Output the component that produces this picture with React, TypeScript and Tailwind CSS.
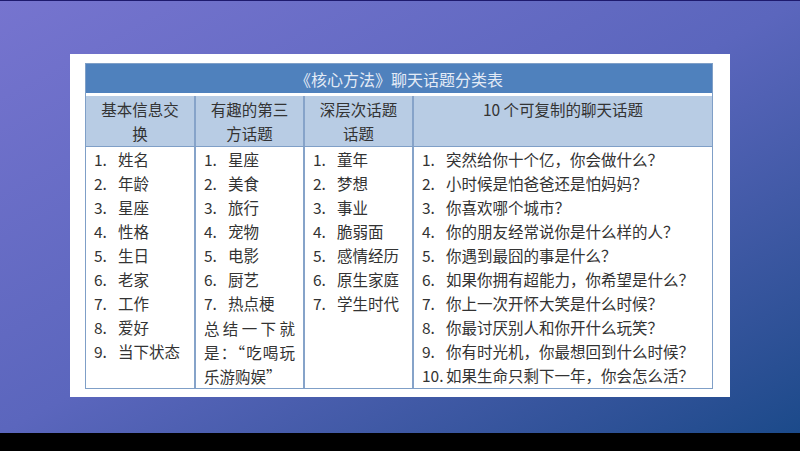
const basics = ["姓名", "年龄", "星座", "性格", "生日", "老家", "工作", "爱好", "当下状态"];
const thirdParty = ["星座", "美食", "旅行", "宠物", "电影", "厨艺", "热点梗"];
const deep = ["童年", "梦想", "事业", "脆弱面", "感情经历", "原生家庭", "学生时代"];
const questions = [
  "突然给你十个亿，你会做什么？",
  "小时候是怕爸爸还是怕妈妈？",
  "你喜欢哪个城市？",
  "你的朋友经常说你是什么样的人？",
  "你遇到最囧的事是什么？",
  "如果你拥有超能力，你希望是什么？",
  "你上一次开怀大笑是什么时候？",
  "你最讨厌别人和你开什么玩笑？",
  "你有时光机，你最想回到什么时候？",
  "如果生命只剩下一年，你会怎么活？",
];

function NumberedList({ items }: { items: string[] }) {
  return (
    <div>
      {items.map((item, idx) => (
        <div key={idx} className="flex h-6 items-center">
          <span className="w-6 shrink-0">{idx + 1}.</span>
          <span className="whitespace-nowrap">{item}</span>
        </div>
      ))}
    </div>
  );
}

export default function App() {
  const font = { fontFamily: "'Noto Sans CJK SC', 'Noto Sans', sans-serif" };

  return (
    <div className="flex h-[451px] w-[800px] flex-col overflow-hidden bg-black" style={font}>
      <div className="h-px bg-[#1e1a6e]" />
      <div className="h-[432px] bg-linear-to-br from-[#7674cf] via-[#5b66bd] to-[#1b4a8a] pt-[53px]">
        {/* Card */}
        <div className="ml-[70px] h-[343px] w-[660px] bg-white pl-[15px] pt-[9px]">
          <div className="w-[628px] border border-[#7f9fc7] text-[15.5px] text-[#333]">
            {/* Title */}
            <div className="flex h-[29px] items-center justify-center bg-[#4f81bd] text-[16px] text-[#e4ebf6]">
              《核心方法》聊天话题分类表
            </div>
            <div className="h-[3px] bg-white" />

            {/* Header */}
            <div className="grid grid-cols-[108px_109px_109px_1fr] border-b border-[#7f9fc7] bg-[#b8cce4] leading-6">
              <div className="h-[50px] px-2 pt-px text-center">
                基本信息交
                <br />换
              </div>
              <div className="border-l-2 border-[#86a3c9] px-2 pt-px text-center">
                有趣的第三
                <br />
                方话题
              </div>
              <div className="border-l-2 border-[#86a3c9] px-2 pt-px text-center">
                深层次话题
                <br />
                话题
              </div>
              <div className="border-l-2 border-[#86a3c9] pt-px text-center">10 个可复制的聊天话题</div>
            </div>

            {/* Body */}
            <div className="grid h-[241px] grid-cols-[108px_109px_109px_1fr]">
              <div className="pl-2 pt-px">
                <NumberedList items={basics} />
              </div>
              <div className="border-l-2 border-[#86a3c9] pl-2 pr-2 pt-px">
                <NumberedList items={thirdParty} />
                <div className="leading-6">
                  <div className="text-justify [text-align-last:justify]">总结一下就</div>
                  <div className="text-justify [text-align-last:justify]">是：“吃喝玩</div>
                  <div>乐游购娱”</div>
                </div>
              </div>
              <div className="border-l-2 border-[#86a3c9] pl-2 pt-px">
                <NumberedList items={deep} />
              </div>
              <div className="border-l-2 border-[#86a3c9] pl-2 pt-px">
                <NumberedList items={questions} />
              </div>
            </div>
          </div>
        </div>
      </div>
      <div className="flex-1 bg-black" />
    </div>
  );
}
